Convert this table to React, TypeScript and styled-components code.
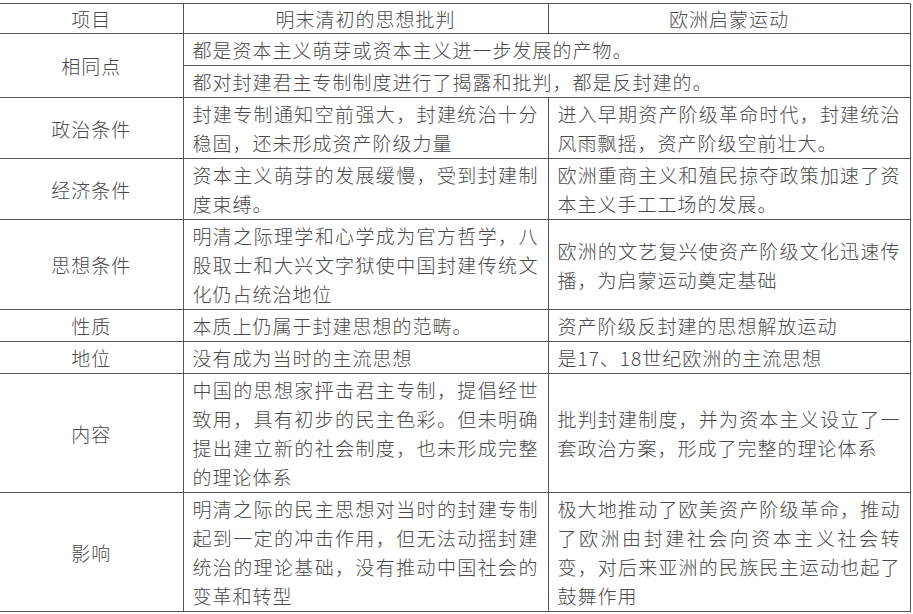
import React from 'react';
import styled, { createGlobalStyle } from 'styled-components';

const Global = createGlobalStyle`
  html, body {
    margin: 0;
    padding: 0;
    background: #fff;
  }
  body {
    font-family: "Noto Sans CJK SC", "Noto Sans", sans-serif;
    color: #4a4a4a;
  }
`;

const Page = styled.div`
  padding: 3px 0 0 0;
  width: 910px;
`;

const Table = styled.table`
  width: 910px;
  border-collapse: collapse;
  table-layout: fixed;
  font-size: 19px;
  letter-spacing: 1px;
  line-height: 29px;
  font-weight: 300;
`;

const Col = styled.col<{ w: number }>`
  width: ${p => p.w}px;
`;

const HeadCell = styled.th`
  box-sizing: border-box;
  font-weight: 300;
  text-align: center;
  border: 1px solid #555;
  padding: 0 9px;
  &:first-child {
    border-left: none;
  }
`;

const LabelCell = styled.td`
  box-sizing: border-box;
  text-align: center;
  vertical-align: middle;
  border: 1px solid #555;
  border-left: none;
  padding: 1px 9px;
`;

const TextCell = styled.td`
  box-sizing: border-box;
  text-align: justify;
  vertical-align: middle;
  border: 1px solid #555;
  padding: 1px 9px;
`;

type Row = { label: string; left: string; right: string };

const rows: Row[] = [
  {
    label: '政治条件',
    left: '封建专制通知空前强大，封建统治十分稳固，还未形成资产阶级力量',
    right: '进入早期资产阶级革命时代，封建统治风雨飘摇，资产阶级空前壮大。',
  },
  {
    label: '经济条件',
    left: '资本主义萌芽的发展缓慢，受到封建制度束缚。',
    right: '欧洲重商主义和殖民掠夺政策加速了资本主义手工工场的发展。',
  },
  {
    label: '思想条件',
    left: '明清之际理学和心学成为官方哲学，八股取士和大兴文字狱使中国封建传统文化仍占统治地位',
    right: '欧洲的文艺复兴使资产阶级文化迅速传播，为启蒙运动奠定基础',
  },
  {
    label: '性质',
    left: '本质上仍属于封建思想的范畴。',
    right: '资产阶级反封建的思想解放运动',
  },
  {
    label: '地位',
    left: '没有成为当时的主流思想',
    right: '是17、18世纪欧洲的主流思想',
  },
  {
    label: '内容',
    left: '中国的思想家抨击君主专制，提倡经世致用，具有初步的民主色彩。但未明确提出建立新的社会制度，也未形成完整的理论体系',
    right: '批判封建制度，并为资本主义设立了一套政治方案，形成了完整的理论体系',
  },
  {
    label: '影响',
    left: '明清之际的民主思想对当时的封建专制起到一定的冲击作用，但无法动摇封建统治的理论基础，没有推动中国社会的变革和转型',
    right: '极大地推动了欧美资产阶级革命，推动了欧洲由封建社会向资本主义社会转变，对后来亚洲的民族民主运动也起了鼓舞作用',
  },
];

const App = () => {
  return (
    <>
      <Global />
      <Page>
        <Table>
          <colgroup>
            <Col w={183} />
            <Col w={365} />
            <Col w={362} />
          </colgroup>
          <thead>
            <tr>
              <HeadCell>项目</HeadCell>
              <HeadCell>明末清初的思想批判</HeadCell>
              <HeadCell>欧洲启蒙运动</HeadCell>
            </tr>
          </thead>
          <tbody>
            <tr>
              <LabelCell rowSpan={2}>相同点</LabelCell>
              <TextCell colSpan={2}>都是资本主义萌芽或资本主义进一步发展的产物。</TextCell>
            </tr>
            <tr>
              <TextCell colSpan={2}>都对封建君主专制制度进行了揭露和批判，都是反封建的。</TextCell>
            </tr>
            {rows.map(({ label, left, right }) => (
              <tr key={label}>
                <LabelCell>{label}</LabelCell>
                <TextCell>{left}</TextCell>
                <TextCell>{right}</TextCell>
              </tr>
            ))}
          </tbody>
        </Table>
      </Page>
    </>
  );
};

export default App;
